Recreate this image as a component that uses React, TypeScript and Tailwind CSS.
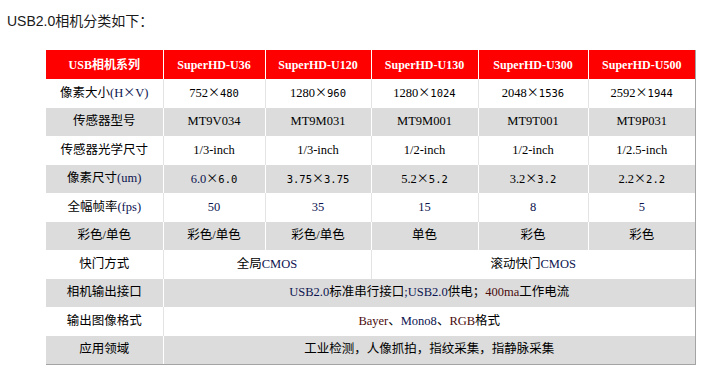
const serif = '"Liberation Serif", "Noto Sans CJK SC", serif';

const N = ({ children }: { children: React.ReactNode }) => (
  <span className="text-[#0c1450]">{children}</span>
);
const R = ({ children }: { children: React.ReactNode }) => (
  <span className="text-[#4a0c0c]">{children}</span>
);
const X = () => <span className="font-['Noto_Sans_CJK_SC'] text-[12px]">×</span>;
const M = ({ children }: { children: React.ReactNode }) => (
  <span className="font-['DejaVu_Sans_Mono'] text-[10.5px]">{children}</span>
);

const headers = ["USB相机系列", "SuperHD-U36", "SuperHD-U120", "SuperHD-U130", "SuperHD-U300", "SuperHD-U500"];

type Cell = { content: React.ReactNode; span?: number };
type Row = { label: React.ReactNode; cells: Cell[] };

const rows: Row[] = [
  {
    label: <>像素大小<N>(H<X />V)</N></>,
    cells: [
      { content: <>752<X /><M>480</M></> },
      { content: <>1280<X /><M>960</M></> },
      { content: <>1280<X /><M>1024</M></> },
      { content: <>2048<X /><M>1536</M></> },
      { content: <>2592<X /><M>1944</M></> },
    ],
  },
  {
    label: "传感器型号",
    cells: ["MT9V034", "MT9M031", "MT9M001", "MT9T001", "MT9P031"].map((c) => ({ content: c })),
  },
  {
    label: "传感器光学尺寸",
    cells: ["1/3-inch", "1/3-inch", "1/2-inch", "1/2-inch", "1/2.5-inch"].map((c) => ({ content: c })),
  },
  {
    label: <>像素尺寸<N>(um)</N></>,
    cells: [
      { content: <><N>6.0</N><X /><M>6.0</M></> },
      { content: <><M>3.75</M><X /><M>3.75</M></> },
      { content: <>5.2<X /><M>5.2</M></> },
      { content: <>3.2<X /><M>3.2</M></> },
      { content: <>2.2<X /><M>2.2</M></> },
    ],
  },
  {
    label: <>全幅帧率<N>(fps)</N></>,
    cells: ["50", "35", "15", "8", "5"].map((c) => ({ content: <N>{c}</N> })),
  },
  {
    label: "彩色/单色",
    cells: ["彩色/单色", "彩色/单色", "单色", "彩色", "彩色"].map((c) => ({ content: c })),
  },
  {
    label: "快门方式",
    cells: [
      { content: <>全局<N>CMOS</N></>, span: 2 },
      { content: <>滚动快门<N>CMOS</N></>, span: 3 },
    ],
  },
  {
    label: "相机输出接口",
    cells: [
      {
        content: <><N>USB2.0</N>标准串行接口<N>;USB2.0</N>供电；<R>400ma</R>工作电流</>,
        span: 5,
      },
    ],
  },
  {
    label: "输出图像格式",
    cells: [{ content: <><R>Bayer</R>、<N>Mono8</N>、<R>RGB</R>格式</>, span: 5 }],
  },
  {
    label: "应用领域",
    cells: [{ content: "工业检测，人像抓拍，指纹采集，指静脉采集", span: 5 }],
  },
];

export default function App() {
  return (
    <div className="w-[703px] h-[381px] bg-white overflow-hidden">
      <div
        className="pl-[7px] pt-[11px] text-[14px] leading-[20px] text-[#1a1a1a]"
        style={{ fontFamily: '"Liberation Sans", "Noto Sans CJK SC", sans-serif' }}
      >
        USB2.0相机分类如下：
      </div>

      <div className="ml-[46px] mt-[19px] w-[650px] border-r border-b border-[#a4a4a4]">
        <table
          className="w-[649px] table-fixed border-collapse text-[12.5px] text-black"
          style={{ fontFamily: serif }}
        >
          <colgroup>
            <col className="w-[117px]" />
            <col className="w-[102px]" />
            <col className="w-[106px]" />
            <col className="w-[107px]" />
            <col className="w-[110px]" />
            <col className="w-[107px]" />
          </colgroup>
          <thead>
            <tr className="h-[29px] bg-[#ff0000]">
              {headers.map((h, i) => (
                <th
                  key={h}
                  className={`p-0 text-center align-middle font-bold text-white text-[12px] ${i < 5 ? "border-r border-white" : ""}`}
                >
                  {h}
                </th>
              ))}
            </tr>
          </thead>
          <tbody>
            {rows.map((r, ri) => {
              const gray = ri % 2 === 1;
              const line = gray ? "border-white" : "border-[#e4e4e4]";
              return (
                <tr key={ri} className={`h-[28.5px] ${gray ? "bg-[#dcdcdc]" : "bg-white"}`}>
                  <td className={`p-0 text-center align-middle whitespace-nowrap border-r ${line}`}>
                    {r.label}
                  </td>
                  {r.cells.map((c, ci) => (
                    <td
                      key={ci}
                      colSpan={c.span}
                      className={`p-0 text-center align-middle whitespace-nowrap ${ci < r.cells.length - 1 ? `border-r ${line}` : ""}`}
                    >
                      {c.content}
                    </td>
                  ))}
                </tr>
              );
            })}
          </tbody>
        </table>
      </div>
    </div>
  );
}
